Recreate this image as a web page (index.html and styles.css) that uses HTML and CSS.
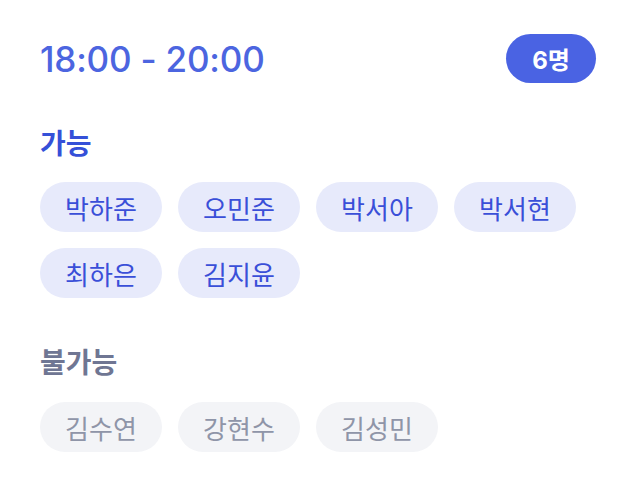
FILE: index.html
```html
<!DOCTYPE html>
<html lang="ko">
<head>
<meta charset="utf-8">
<link rel="stylesheet" href="styles.css">
</head>
<body>
<div class="card">
  <div class="header">
    <div class="time">18:00 - 20:00</div>
    <div class="count">6명</div>
  </div>
  <div class="section">
    <div class="title available">가능</div>
    <div class="chips">
      <span class="chip on">박하준</span>
      <span class="chip on">오민준</span>
      <span class="chip on">박서아</span>
      <span class="chip on">박서현</span>
      <span class="chip on">최하은</span>
      <span class="chip on">김지윤</span>
    </div>
  </div>
  <div class="section">
    <div class="title unavailable">불가능</div>
    <div class="chips">
      <span class="chip off">김수연</span>
      <span class="chip off">강현수</span>
      <span class="chip off">김성민</span>
    </div>
  </div>
</div>
</body>
</html>
```
FILE: styles.css
```css
* { box-sizing: border-box; }
html, body { margin: 0; background: #ffffff; }
body {
  font-family: Inter, "Noto Sans CJK KR", sans-serif;
}
.card {
  width: 636px;
  padding: 34px 40px 0 40px;
}
.header {
  display: flex;
  justify-content: space-between;
  align-items: center;
  height: 49px;
}
.time {
  font-size: 35px;
  font-weight: 500;
  color: #4c65e0;
  letter-spacing: -0.2px;
}
.count {
  width: 90px;
  height: 49px;
  border-radius: 25px;
  background: #4a63e3;
  color: #fff;
  font-size: 24px;
  font-weight: 700;
  display: flex;
  align-items: center;
  justify-content: center;
}
.section { margin-top: 43px; }
.section + .section { margin-top: 47px; }
.title {
  font-size: 28px;
  font-weight: 600;
  line-height: 36px;
}
.title.available { color: #3550d8; }
.title.unavailable { color: #6f7693; }
.chips {
  margin-top: 20px;
  display: flex;
  flex-wrap: wrap;
  gap: 16px;
  width: 552px;
}
.section + .section .chips { margin-top: 21px; }
.chip {
  width: 122px;
  height: 50px;
  border-radius: 25px;
  display: flex;
  align-items: center;
  justify-content: center;
  font-size: 26px;
  font-weight: 400;
}
.chip.on { background: #e7eafb; color: #3a4fd8; }
.chip.off { background: #f3f4f7; color: #8f95a8; }
```
